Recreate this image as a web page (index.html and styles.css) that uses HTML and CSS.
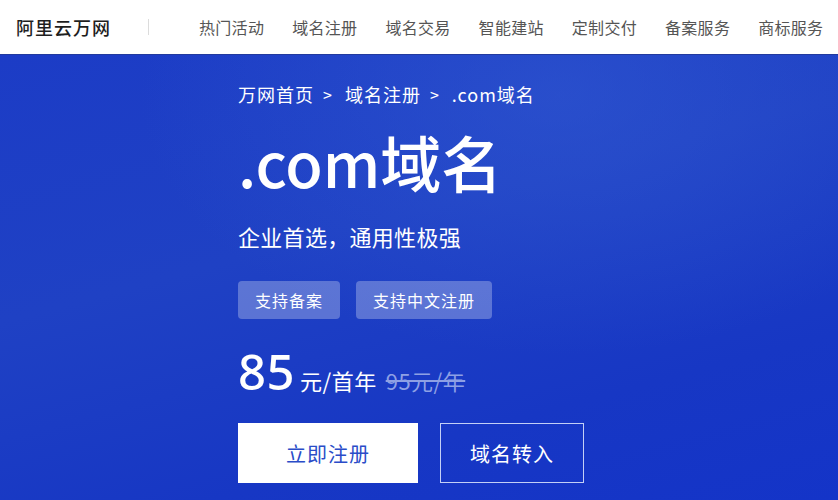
FILE: index.html
```html
<!DOCTYPE html>
<html lang="zh-CN">
<head>
<meta charset="utf-8">
<link rel="stylesheet" href="styles.css">
</head>
<body>
<header class="topbar">
  <div class="logo">阿里云万网</div>
  <div class="sep"></div>
  <nav class="nav">
    <a>热门活动</a><a>域名注册</a><a>域名交易</a><a>智能建站</a><a>定制交付</a><a>备案服务</a><a>商标服务</a>
  </nav>
</header>
<main class="hero">
  <div class="content">
    <div class="crumbs"><span>万网首页</span><span class="arr">&gt;</span><span>域名注册</span><span class="arr">&gt;</span><span>.com域名</span></div>
    <h1 class="title">.com域名</h1>
    <p class="sub">企业首选，通用性极强</p>
    <div class="tags"><span class="tag">支持备案</span><span class="tag">支持中文注册</span></div>
    <div class="price"><span class="num">85</span><span class="unit">元/首年</span><span class="old">95元/年</span></div>
    <div class="btns"><button class="btn primary">立即注册</button><button class="btn ghost">域名转入</button></div>
  </div>
</main>
</body>
</html>
```
FILE: styles.css
```css
* { box-sizing: border-box; }
html, body { margin: 0; padding: 0; }
body {
  width: 838px; height: 500px; overflow: hidden;
  font-family: "Noto Sans CJK SC", "Noto Sans", sans-serif;
  background: #1a3bc2;
}
.topbar {
  height: 54px; background: #fff;
  display: flex; align-items: center;
  padding-left: 16px;
}
.logo { font-size: 18px; font-weight: 500; color: #1f1f1f; letter-spacing: 1px; }
.sep { width: 1px; height: 16px; background: #dcdcdc; margin-left: 37px; margin-right: 50px; }
.nav { display: flex; gap: 28px; }
.nav a { font-size: 16px; color: #555; white-space: nowrap; letter-spacing: 0.3px; }
.hero {
  height: 446px;
  border-top: 1px solid #223a9e;
  background:
    radial-gradient(ellipse 420px 260px at 560px 40px, rgba(50,90,210,0.55), rgba(50,90,210,0) 100%),
    linear-gradient(165deg, #1c3cc6 0%, #1f41c4 40%, #1737c4 75%, #1434c8 100%);
  color: #fff;
  padding-left: 238px; padding-top: 25px;
}
.content { display: flex; flex-direction: column; align-items: flex-start; }
.crumbs { font-size: 18px; line-height: 28px; display: flex; letter-spacing: 1px; }
.crumbs .arr { margin: 0 12px 0 9px; font-size: 16px; }
.title { margin: 19px 0 0; font-size: 61px; line-height: 70px; font-weight: 500; letter-spacing: 0; }
.sub { margin: 24px 0 0; font-size: 22px; line-height: 30px; letter-spacing: 0.3px; }
.tags { display: flex; gap: 16px; margin-top: 30px; }
.tag {
  background: rgba(255,255,255,0.28); border-radius: 4px;
  height: 38px; line-height: 38px; padding: 0 17px;
  font-size: 16px; letter-spacing: 1px;
}
.price { display: flex; align-items: baseline; margin-top: 24px; }
.num { font-size: 49px; line-height: 56px; font-weight: 500; font-family: "Noto Sans", sans-serif; letter-spacing: 0.5px; }
.unit { font-size: 22px; margin-left: 5px; letter-spacing: 0.5px; }
.old { font-size: 22px; margin-left: 9px; color: #8ea0e4; text-decoration: line-through; letter-spacing: 0.5px; }
.btns { display: flex; gap: 22px; margin-top: 24px; }
.btn {
  font-family: inherit; font-size: 20px; height: 60px; cursor: pointer;
  letter-spacing: 1px;
}
.primary { width: 180px; background: #fff; color: #2a4cc8; border: none; }
.ghost { width: 144px; background: transparent; color: #fff; border: 1.5px solid #c4d0f6; }
```
